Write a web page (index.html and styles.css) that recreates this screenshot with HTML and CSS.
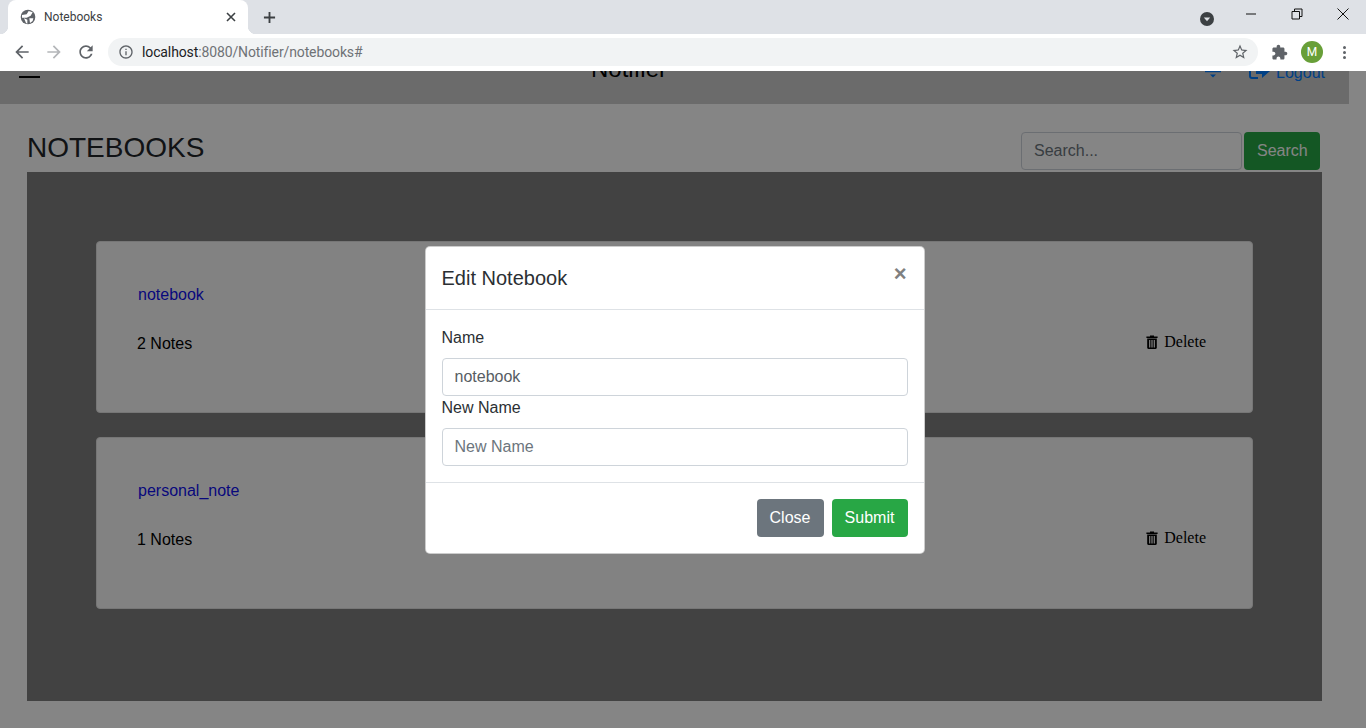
FILE: index.html
```html
<!DOCTYPE html>
<html lang="en">
<head>
  <meta charset="UTF-8" />
  <meta name="viewport" content="width=device-width, initial-scale=1.0"/>
  <title>Notebooks</title>
  <link rel="stylesheet" href="styles.css">
</head>
<body>
  <div class="browser">
    <div class="tabstrip">
      <div class="tab">
        <svg class="tab-icon" viewBox="0 0 24 24"><circle cx="12" cy="12" r="11"/><path class="tab-icon-land" d="M3 9l7-1 3-5 6 2-3 5-6 3-7 0zM14 14h6l-1 4-4 3zM6 14l5 2v6l-2-1z"/></svg>
        <span class="tab-title">Notebooks</span>
        <svg class="tab-close" viewBox="0 0 10 10"><path d="M1 1l8 8M9 1l-8 8"/></svg>
      </div>
      <svg class="new-tab" viewBox="0 0 14 14"><path d="M7 1v12M1 7h12"/></svg>
      <svg class="tab-search" viewBox="0 0 14 14"><circle cx="7" cy="7" r="7"/><path class="tab-search-arrow" d="M3.8 5.4h6.4L7 9.2z"/></svg>
      <div class="win-controls">
        <div class="win-btn"><svg viewBox="0 0 12 12"><path d="M1 6h10"/></svg></div>
        <div class="win-btn"><svg viewBox="0 0 12 12"><path d="M1 3.5h7.5V11H1zM3.5 3.5V1H11v7.5H8.5"/></svg></div>
        <div class="win-btn"><svg viewBox="0 0 12 12"><path d="M.5.5l11 11M11.5.5l-11 11"/></svg></div>
      </div>
    </div>
    <div class="toolbar">
      <svg class="nav-icon" viewBox="0 0 24 24"><path d="M20 11H7.83l5.59-5.59L12 4l-8 8 8 8 1.41-1.41L7.83 13H20v-2z"/></svg>
      <svg class="nav-icon disabled" viewBox="0 0 24 24"><path d="M4 11h12.17l-5.59-5.59L12 4l8 8-8 8-1.41-1.41L16.17 13H4v-2z"/></svg>
      <svg class="nav-icon" viewBox="0 0 24 24"><path d="M17.65 6.35C16.2 4.9 14.21 4 12 4c-4.42 0-7.99 3.58-7.99 8s3.57 8 7.99 8c3.73 0 6.84-2.55 7.73-6h-2.08c-.82 2.33-3.04 4-5.65 4-3.31 0-6-2.69-6-6s2.69-6 6-6c1.66 0 3.14.69 4.22 1.78L13 11h7V4l-2.35 2.35z"/></svg>
      <div class="omnibox">
        <svg class="info-icon" viewBox="0 0 24 24"><path d="M11 7h2v2h-2zm0 4h2v6h-2zm1-9C6.48 2 2 6.48 2 12s4.48 10 10 10 10-4.48 10-10S17.52 2 12 2zm0 18c-4.41 0-8-3.59-8-8s3.59-8 8-8 8 3.59 8 8-3.59 8-8 8z"/></svg>
        <span class="url"><span class="url-host">localhost</span>:8080/Notifier/notebooks#</span>
        <svg class="star-icon" viewBox="0 0 24 24"><path d="M22 9.24l-7.19-.62L12 2 9.19 8.63 2 9.24l5.46 4.73L5.82 21 12 17.27 18.18 21l-1.63-7.03L22 9.24zM12 15.4l-3.76 2.27 1-4.28-3.32-2.88 4.38-.38L12 6.1l1.71 4.04 4.38.38-3.32 2.88 1 4.28L12 15.4z"/></svg>
      </div>
      <svg class="puzzle-icon" viewBox="0 0 24 24"><path d="M20.5 11H19V7c0-1.1-.9-2-2-2h-4V3.5C13 2.12 11.88 1 10.5 1S8 2.12 8 3.5V5H4c-1.1 0-1.99.9-1.99 2v3.8H3.5c1.49 0 2.7 1.21 2.7 2.7s-1.21 2.7-2.7 2.7H2V20c0 1.1.9 2 2 2h3.8v-1.5c0-1.49 1.21-2.7 2.7-2.7 1.49 0 2.7 1.21 2.7 2.7V22H17c1.1 0 2-.9 2-2v-4h1.5c1.38 0 2.5-1.12 2.5-2.5S21.88 11 20.5 11z"/></svg>
      <div class="avatar">M</div>
      <div class="menu-dots"><span></span><span></span><span></span></div>
    </div>
  </div>

  <div class="page">
    <nav class="navbar">
      <div class="hamburger"></div>
      <div class="brand">Notifier</div>
      <div class="nav-links">
        <svg class="nav-bell" viewBox="0 0 18 18"><path class="bell-line" d="M1 8.5h16"/><path class="bell-tip" d="M6 11.5h6l-3 3z"/></svg>
        <a class="nav-logout" href="#">
          <svg viewBox="0 0 22 18"><path class="logout-frame" d="M2 3v10q0 2 2 2h6"/><path class="logout-arrow" d="M8 4h6V1l8 7-8 7v-4H8z"/></svg>
          Logout
        </a>
      </div>
    </nav>

    <div class="heading-row">
      <h1>NOTEBOOKS</h1>
      <form class="search-form">
        <input class="search-input" type="text" placeholder="Search..." />
        <button class="btn btn-search" type="button">Search</button>
      </form>
    </div>

    <div class="panel">
      <div class="card">
        <div class="card-info">
          <a class="card-link" href="#">notebook</a>
          <p class="card-count">2 Notes</p>
        </div>
        <a class="card-delete" href="#">
          <svg viewBox="0 0 12 14"><path d="M4 1.5V.6h4v.9h3.6v1.4H.4V1.5zM1.2 3.6h9.6v9.2c0 .7-.5 1.2-1.2 1.2H2.4c-.7 0-1.2-.5-1.2-1.2zm1.9 1.3v7.6h1.2V4.9zm2.3 0v7.6h1.2V4.9zm2.3 0v7.6h1.2V4.9z" fill-rule="evenodd"/></svg>
          Delete
        </a>
      </div>
      <div class="card">
        <div class="card-info">
          <a class="card-link" href="#">personal_note</a>
          <p class="card-count">1 Notes</p>
        </div>
        <a class="card-delete" href="#">
          <svg viewBox="0 0 12 14"><path d="M4 1.5V.6h4v.9h3.6v1.4H.4V1.5zM1.2 3.6h9.6v9.2c0 .7-.5 1.2-1.2 1.2H2.4c-.7 0-1.2-.5-1.2-1.2zm1.9 1.3v7.6h1.2V4.9zm2.3 0v7.6h1.2V4.9zm2.3 0v7.6h1.2V4.9z" fill-rule="evenodd"/></svg>
          Delete
        </a>
      </div>
    </div>
  </div>

  <div class="backdrop">
    <div class="modal">
      <div class="modal-header">
        <h5>Edit Notebook</h5>
        <span class="modal-close">&times;</span>
      </div>
      <div class="modal-body">
        <label>Name</label>
        <input class="field" type="text" value="notebook" />
        <label>New Name</label>
        <input class="field" type="text" placeholder="New Name" />
      </div>
      <div class="modal-footer">
        <button class="btn btn-close" type="button">Close</button>
        <button class="btn btn-submit" type="button">Submit</button>
      </div>
    </div>
  </div>
</body>
</html>
```

FILE: styles.css
```css
* {
  box-sizing: border-box;
}

html,
body {
  height: 100%;
}

body {
  margin: 0;
  overflow: hidden;
  font-family: "Liberation Sans", Arial, sans-serif;
  font-size: 16px;
  line-height: 1.5;
  color: #212529;
  background: #fff;
}

/* browser chrome */
.browser {
  position: relative;
  z-index: 2;
  height: 71px;
  font-family: Roboto, sans-serif;
}

.tabstrip {
  display: flex;
  align-items: center;
  height: 34px;
  padding-left: 8px;
  background: #dee1e6;
}

.tab {
  position: relative;
  display: flex;
  align-items: center;
  gap: 8px;
  width: 240px;
  height: 34px;
  padding: 0 12px;
  background: #fff;
  border-radius: 8px 8px 0 0;
}

.tab::before,
.tab::after {
  content: "";
  position: absolute;
  bottom: 0;
  width: 8px;
  height: 8px;
}

.tab::before {
  left: -8px;
  background: radial-gradient(circle at 0 0, transparent 8px, #fff 8.5px);
}

.tab::after {
  right: -8px;
  background: radial-gradient(circle at 100% 0, transparent 8px, #fff 8.5px);
}

.tab-icon {
  width: 16px;
  height: 16px;
  fill: #5f6368;
}

.tab-icon-land {
  fill: #fff;
}

.tab-title {
  flex: 1;
  font-size: 12px;
  color: #3c4043;
}

.tab-close {
  width: 10px;
  height: 10px;
  fill: none;
  stroke: #3c4043;
  stroke-width: 1.6;
}

.new-tab {
  width: 13px;
  height: 13px;
  margin-left: 15px;
  fill: none;
  stroke: #3c4043;
  stroke-width: 2;
}

.tab-search {
  width: 14px;
  height: 14px;
  margin-left: auto;
  margin-top: 4px;
  margin-right: 14px;
  fill: #3c4043;
}

.tab-search-arrow {
  fill: #dee1e6;
}

.win-controls {
  display: flex;
  align-self: flex-start;
}

.win-btn {
  display: flex;
  align-items: center;
  justify-content: center;
  width: 46px;
  height: 28px;
}

.win-btn svg {
  width: 12px;
  height: 12px;
  fill: none;
  stroke: #111;
  stroke-width: 1;
}

.toolbar {
  display: flex;
  align-items: center;
  gap: 12px;
  height: 37px;
  padding: 0 0 1px 12px;
  background: #fff;
}

.nav-icon {
  width: 20px;
  height: 20px;
  fill: #5f6368;
}

.nav-icon.disabled {
  fill: #b4b6b9;
}

.omnibox {
  display: flex;
  align-items: center;
  width: 1150px;
  height: 28px;
  padding: 0 9px 0 10px;
  background: #f1f3f4;
  border-radius: 14px;
}

.info-icon {
  width: 16px;
  height: 16px;
  fill: #5f6368;
}

.url {
  flex: 1;
  margin-left: 8px;
  font-size: 14px;
  letter-spacing: -0.12px;
  color: #6f7276;
}

.url-host {
  color: #202124;
}

.star-icon {
  width: 18px;
  height: 18px;
  fill: #5f6368;
}

.puzzle-icon {
  width: 17px;
  height: 17px;
  margin-left: 1px;
  fill: #5f6368;
}

.avatar {
  display: flex;
  align-items: center;
  justify-content: center;
  width: 22px;
  height: 22px;
  margin-left: 1px;
  font-size: 12px;
  color: #fff;
  background: #689f38;
  border-radius: 50%;
}

.menu-dots {
  display: flex;
  flex-direction: column;
  gap: 2px;
  margin-left: 8px;
}

.menu-dots span {
  width: 3px;
  height: 3px;
  background: #5f6368;
  border-radius: 50%;
}

/* page */
.page {
  height: 657px;
  overflow: hidden;
}

.navbar {
  display: flex;
  justify-content: space-between;
  align-items: flex-end;
  width: 1349px;
  height: 70px;
  margin-top: -37px;
  padding: 0 24px 20px 19px;
  background: #cecece;
}

.hamburger {
  width: 21px;
  height: 2px;
  margin-bottom: 6px;
  background: #000;
}

.brand {
  margin-left: 14px;
  font-size: 24px;
  line-height: 30px;
  color: #000;
}

.nav-links {
  display: flex;
  align-items: flex-end;
  gap: 26px;
}

.nav-bell {
  width: 18px;
  height: 18px;
  margin-bottom: 3px;
}

.bell-line {
  fill: none;
  stroke: #007bff;
  stroke-width: 1.5;
}

.bell-tip {
  fill: #007bff;
}

.nav-logout {
  display: flex;
  align-items: flex-end;
  gap: 6px;
  color: #007bff;
  text-decoration: none;
  line-height: 22px;
}

.nav-logout svg {
  width: 22px;
  height: 18px;
  margin-bottom: 3px;
}

.logout-frame {
  fill: none;
  stroke: #007bff;
  stroke-width: 2;
}

.logout-arrow {
  fill: #007bff;
}

.heading-row {
  display: flex;
  justify-content: space-between;
  align-items: flex-end;
  width: 1349px;
  height: 68px;
  padding: 0 29px 2px 27px;
}

h1 {
  margin: 0 0 5px;
  font-size: 28px;
  font-weight: 400;
  line-height: 34px;
  color: #212529;
}

.search-form {
  display: flex;
  gap: 2px;
}

.search-input {
  width: 221px;
  height: 38px;
  padding: 6px 12px;
  font: inherit;
  color: #495057;
  background: #fff;
  border: 1px solid #ced4da;
  border-radius: 4px;
  outline: none;
}

.search-input::placeholder,
.field::placeholder {
  color: #6c757d;
  opacity: 1;
}

.btn {
  height: 38px;
  padding: 6px 12px;
  font: inherit;
  color: #fff;
  border: 1px solid transparent;
  border-radius: 4px;
}

.btn-search {
  width: 76px;
  background: #28a745;
}

.panel {
  display: flex;
  flex-direction: column;
  gap: 24px;
  width: 1295px;
  height: 529px;
  margin-left: 27px;
  padding: 69px;
  background: #7f7f7f;
}

.card {
  display: flex;
  justify-content: space-between;
  align-items: flex-start;
  width: 1157px;
  height: 172px;
  padding: 41px 46px 0 41px;
  background: #fafafa;
  border: 1px solid #e2e2e2;
  border-radius: 4px;
}

.card-link {
  display: block;
  color: #1010ee;
  text-decoration: none;
}

.card-count {
  margin: 25px 0 0 -1px;
  color: #000;
}

.card-delete {
  display: flex;
  align-items: center;
  gap: 6px;
  margin-top: 47px;
  font-family: "Liberation Serif", serif;
  color: #000;
  text-decoration: none;
}

.card-delete svg {
  width: 12px;
  height: 14px;
  fill: #000;
}

/* modal on top of the dimmed page */
.backdrop {
  position: absolute;
  top: 71px;
  left: 0;
  right: 0;
  bottom: 0;
  display: flex;
  justify-content: center;
  align-items: flex-start;
  padding: 175px 17px 0 0;
  background: rgba(0, 0, 0, 0.48);
}

.modal {
  width: 500px;
  height: 308px;
  background: #fff;
  border: 1px solid rgba(0, 0, 0, 0.2);
  border-radius: 5px;
}

.modal-header {
  position: relative;
  height: 63px;
  padding: 16px 16px 0;
  border-bottom: 1px solid #dee2e6;
}

.modal-header h5 {
  margin: 0;
  font-size: 20px;
  font-weight: 400;
  line-height: 30px;
  color: #2b2f33;
}

.modal-close {
  position: absolute;
  top: 10px;
  right: 17px;
  font-size: 22px;
  font-weight: 700;
  line-height: 34px;
  color: #808080;
}

.modal-body {
  height: 173px;
  padding: 16px 16px 0;
  border-bottom: 1px solid #dee2e6;
}

.modal-body label {
  display: block;
  margin-bottom: 8px;
  color: #2b2f33;
}

.field {
  display: block;
  width: 100%;
  height: 38px;
  padding: 6px 12px;
  font: inherit;
  color: #575d63;
  background: #fff;
  border: 1px solid #ced4da;
  border-radius: 4px;
  outline: none;
}

.modal-footer {
  display: flex;
  justify-content: flex-end;
  gap: 8px;
  padding: 16px;
}

.btn-close {
  width: 67px;
  background: #6c757d;
}

.btn-submit {
  width: 76px;
  background: #28a745;
}
```
